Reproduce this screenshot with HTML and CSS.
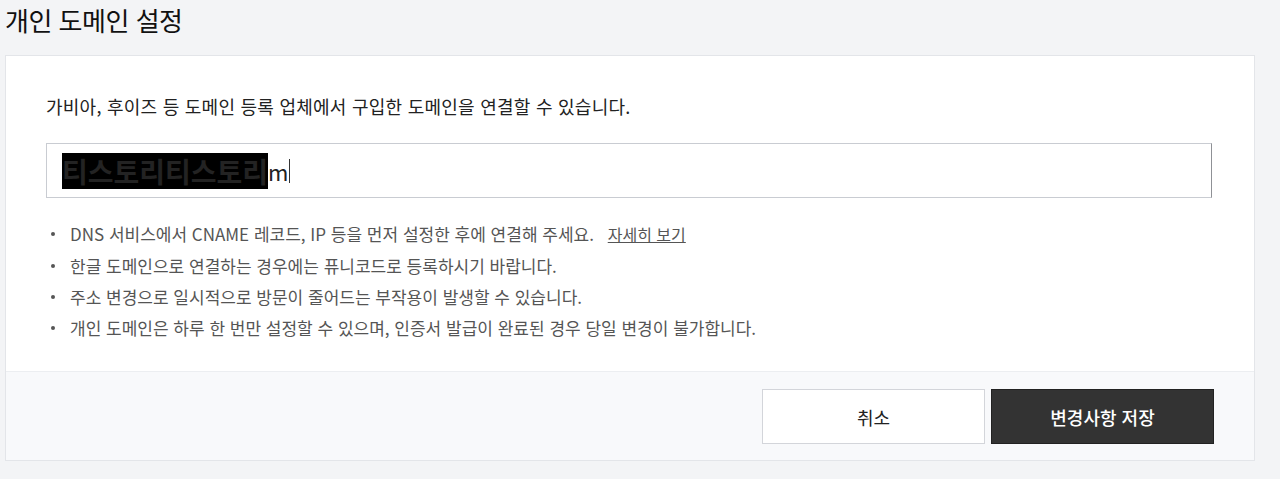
FILE: index.html
```html
<!DOCTYPE html>
<html lang="ko">
<head>
<meta charset="utf-8">
<link rel="stylesheet" href="styles.css">
</head>
<body>
<div class="page">
  <h1 class="title">개인 도메인 설정</h1>
  <section class="card">
    <div class="card-body">
      <p class="desc">가비아, 후이즈 등 도메인 등록 업체에서 구입한 도메인을 연결할 수 있습니다.</p>
      <div class="field"><span class="sel">티스토리티스토리</span><span class="typed">m</span><span class="caret"></span></div>
      <ul class="notes">
        <li>DNS 서비스에서 CNAME 레코드, IP 등을 먼저 설정한 후에 연결해 주세요. <a class="more" href="#">자세히 보기</a></li>
        <li>한글 도메인으로 연결하는 경우에는 퓨니코드로 등록하시기 바랍니다.</li>
        <li>주소 변경으로 일시적으로 방문이 줄어드는 부작용이 발생할 수 있습니다.</li>
        <li>개인 도메인은 하루 한 번만 설정할 수 있으며, 인증서 발급이 완료된 경우 당일 변경이 불가합니다.</li>
      </ul>
    </div>
    <div class="card-foot">
      <button class="btn btn-cancel" type="button">취소</button>
      <button class="btn btn-save" type="button">변경사항 저장</button>
    </div>
  </section>
</div>
</body>
</html>
```
FILE: styles.css
```css
* { box-sizing: border-box; }
html, body { margin: 0; padding: 0; }
body {
  background: #f3f4f6;
  font-family: "Noto Sans CJK KR", "Noto Sans", sans-serif;
  color: #222;
}
.page { padding: 0 25px 0 5px; }
.title {
  margin: 0;
  height: 55px;
  padding-top: 0;
  font-size: 26px;
  font-weight: 400;
  line-height: 40px;
  color: #111;
  letter-spacing: -0.5px;
}
.card {
  background: #fff;
  border: 1px solid #e3e5e9;
  width: 1250px;
}
.card-body { padding: 35px 40px 28px 40px; }
.desc {
  margin: 0 0 22px 0;
  font-size: 18px;
  line-height: 30px;
  color: #222;
  letter-spacing: 0.25px;
}
.field {
  display: flex;
  align-items: center;
  height: 55px;
  width: 1166px;
  border: 1px solid #c9ccd2;
  border-right-color: #8f9196;
  padding-left: 15px;
  font-size: 28px;
}
.sel {
  background: #000;
  color: #232323;
  font-weight: 700;
  line-height: 36px;
  height: 36px;
}
.typed {
  color: #222;
  font-size: 22px;
  line-height: 36px;
}
.caret {
  display: inline-block;
  width: 1px;
  height: 24px;
  background: #333;
  margin-left: 1px;
}
.notes {
  list-style: none;
  margin: 20px 0 0 0;
  padding: 0;
}
.notes li {
  position: relative;
  padding-left: 24px;
  font-size: 17px;
  line-height: 31px;
  color: #555;
  letter-spacing: 0;
}
.notes li::before {
  content: "";
  position: absolute;
  left: 5px;
  top: 14px;
  width: 4px;
  height: 4px;
  border-radius: 50%;
  background: #555;
}
.more {
  color: #555;
  text-decoration: underline;
  margin-left: 9px;
  font-size: 16px;
}
.card-foot {
  display: flex;
  justify-content: flex-end;
  gap: 6px;
  background: #f8f9fb;
  border-top: 1px solid #eceef1;
  padding: 17px 40px 16px 40px;
}
.btn {
  width: 223px;
  height: 55px;
  font-family: inherit;
  font-size: 18px;
  cursor: pointer;
}
.btn-cancel {
  background: #fff;
  border: 1px solid #d3d5da;
  color: #222;
}
.btn-save {
  background: #333;
  border: 1px solid #222;
  color: #fff;
  font-weight: 500;
}
```
